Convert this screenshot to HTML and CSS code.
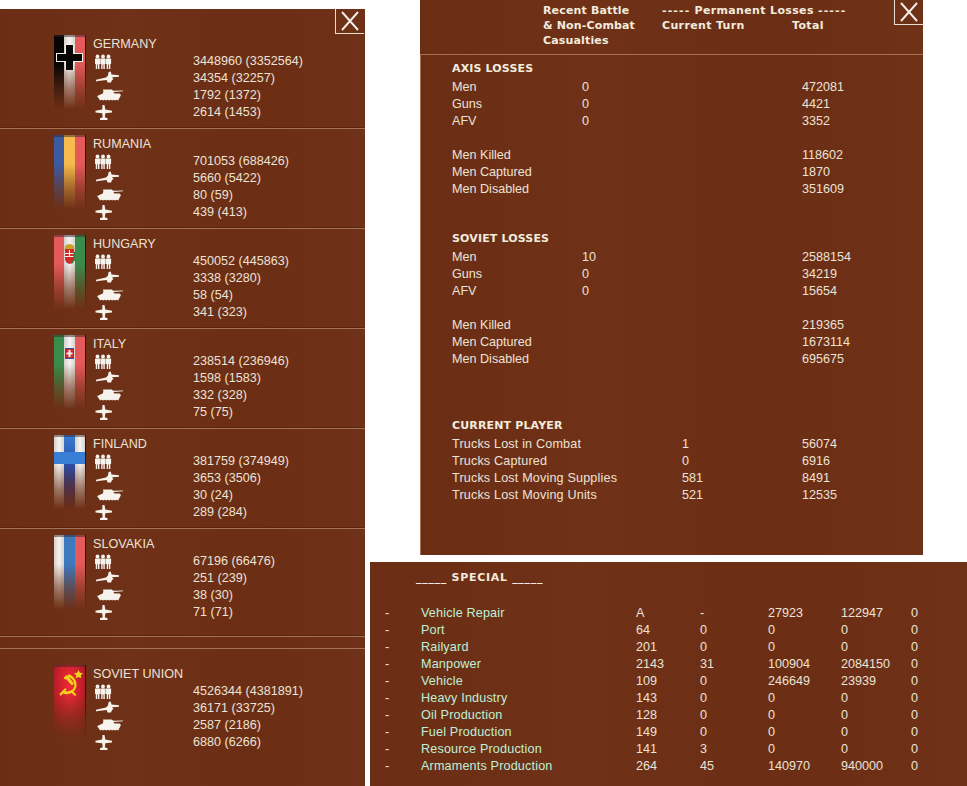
FILE: index.html
```html
<!DOCTYPE html>
<html lang="en">
<head>
<meta charset="utf-8">
<title>Losses</title>
<link rel="stylesheet" href="styles.css">
</head>
<body>
<svg class="defs" width="0" height="0" aria-hidden="true">
  <symbol id="men" viewBox="0 0 32 17">
    <g><circle cx="4.500" cy="3.500" r="1.900"/><path d="M2 5.500h5.200v5.500H6.400V16H5v-4.500H4.200V16H2.800V11H2z"/></g>
    <g><circle cx="10" cy="3.500" r="1.900"/><path d="M7.400 5.500h5.200v5.500h-.8V16h-1.400v-4.500h-.8V16H8.200V11h-.8z"/></g>
    <g><circle cx="15.500" cy="3.500" r="1.900"/><path d="M12.900 5.500h5.200v5.500h-.8V16h-1.400v-4.500h-.8V16h-1.400V11h-.8z"/></g>
  </symbol>
  <symbol id="gun" viewBox="0 0 32 17">
    <path d="M3 9.800l10-2.300 2-2 .6-3.500 2-.5 1 3 7.400.8v1.500l-7 .5 1.500 1.800-1.500 1-1 2.400h-3.500l-.8-2.500-8.700 1-1.800.4z"/>
  </symbol>
  <symbol id="tank" viewBox="0 0 32 17">
    <path d="M10 2.500h8.500l2 1.300 9.500-.3v.8l-9.500.7 .8 1.500h5.200l1.500 1.500-2.800 5.400-1.500-.6-1.500.6-1.500-.6-1.500.6-1.500-.6-1.500.6-1.500-.6-1.500.6-1.500-.6-1.500.6-1.500-.6-1.500.6-3-4.200V9l5.500-2.500 .7-2z"/>
  </symbol>
  <symbol id="plane" viewBox="0 0 32 17">
    <path d="M9.500 1h2l.8 4.500 6.700 1.200v1.800l-6.700.8-.5 4 2.700 1V16H7v-1.700l2.700-1-.5-4-6.700-.8V6.700l6.700-1.200z"/>
  </symbol>
</svg>

<section class="panel forces">
  <div class="close"><svg viewBox="0 0 28 24"><path d="M6 3l16 18M22 3L6 21"/></svg></div>

  <div class="country first">
    <div class="flag"><i class="s-black"></i><i class="s-white"></i><i class="s-red"></i>
      <svg class="emblem" viewBox="0 0 31 75"><path class="ec-w" d="M11 9h9v9h9v9h-9v9h-9v-9H2v-9h9z"/><path class="ec-k" d="M12 10h7v9h9v7h-9v9h-7v-9H3v-7h9z"/></svg>
    </div>
    <div class="info"><div class="name">GERMANY</div>
      <div class="stat"><svg class="ic"><use href="#men"/></svg><span>3448960 (3352564)</span></div>
      <div class="stat"><svg class="ic"><use href="#gun"/></svg><span>34354 (32257)</span></div>
      <div class="stat"><svg class="ic"><use href="#tank"/></svg><span>1792 (1372)</span></div>
      <div class="stat"><svg class="ic"><use href="#plane"/></svg><span>2614 (1453)</span></div>
    </div>
  </div>

  <div class="country">
    <div class="flag"><i class="s-blue"></i><i class="s-yellow"></i><i class="s-red"></i></div>
    <div class="info"><div class="name">RUMANIA</div>
      <div class="stat"><svg class="ic"><use href="#men"/></svg><span>701053 (688426)</span></div>
      <div class="stat"><svg class="ic"><use href="#gun"/></svg><span>5660 (5422)</span></div>
      <div class="stat"><svg class="ic"><use href="#tank"/></svg><span>80 (59)</span></div>
      <div class="stat"><svg class="ic"><use href="#plane"/></svg><span>439 (413)</span></div>
    </div>
  </div>

  <div class="country">
    <div class="flag"><i class="s-red"></i><i class="s-white"></i><i class="s-green"></i>
      <svg class="emblem" viewBox="0 0 31 75"><path class="ec-g" d="M11 11q4.500-4 9 0l.5 4h-10z"/><path class="ec-r" d="M11 14h9v11q-1 3-4.500 4-3.500-1-4.500-4z"/><path class="ec-w" d="M11 18h9v1h-9zM11 21h9v1h-9zM15 15h1v6h-1z"/><path class="ec-gr" d="M19.500 16l1.500 1v8l-3 4-1-1 2.500-4z"/></svg>
    </div>
    <div class="info"><div class="name">HUNGARY</div>
      <div class="stat"><svg class="ic"><use href="#men"/></svg><span>450052 (445863)</span></div>
      <div class="stat"><svg class="ic"><use href="#gun"/></svg><span>3338 (3280)</span></div>
      <div class="stat"><svg class="ic"><use href="#tank"/></svg><span>58 (54)</span></div>
      <div class="stat"><svg class="ic"><use href="#plane"/></svg><span>341 (323)</span></div>
    </div>
  </div>

  <div class="country">
    <div class="flag"><i class="s-green"></i><i class="s-white"></i><i class="s-red"></i>
      <svg class="emblem" viewBox="0 0 31 75"><path class="ec-b" d="M11 13h9v11h-9z"/><path class="ec-r" d="M12 14h7v9h-7z"/><path class="ec-w" d="M14.500 15h2v2.500h2v2h-2V22h-2v-2.500h-2v-2h2z"/></svg>
    </div>
    <div class="info"><div class="name">ITALY</div>
      <div class="stat"><svg class="ic"><use href="#men"/></svg><span>238514 (236946)</span></div>
      <div class="stat"><svg class="ic"><use href="#gun"/></svg><span>1598 (1583)</span></div>
      <div class="stat"><svg class="ic"><use href="#tank"/></svg><span>332 (328)</span></div>
      <div class="stat"><svg class="ic"><use href="#plane"/></svg><span>75 (75)</span></div>
    </div>
  </div>

  <div class="country">
    <div class="flag"><i class="s-white"></i><i class="s-fin"></i><i class="s-white"></i>
      <svg class="emblem" viewBox="0 0 31 75"><path class="ec-fin" d="M0 17h31v12H0z"/></svg>
    </div>
    <div class="info"><div class="name">FINLAND</div>
      <div class="stat"><svg class="ic"><use href="#men"/></svg><span>381759 (374949)</span></div>
      <div class="stat"><svg class="ic"><use href="#gun"/></svg><span>3653 (3506)</span></div>
      <div class="stat"><svg class="ic"><use href="#tank"/></svg><span>30 (24)</span></div>
      <div class="stat"><svg class="ic"><use href="#plane"/></svg><span>289 (284)</span></div>
    </div>
  </div>

  <div class="country tall">
    <div class="flag"><i class="s-white"></i><i class="s-midblue"></i><i class="s-red"></i></div>
    <div class="info"><div class="name">SLOVAKIA</div>
      <div class="stat"><svg class="ic"><use href="#men"/></svg><span>67196 (66476)</span></div>
      <div class="stat"><svg class="ic"><use href="#gun"/></svg><span>251 (239)</span></div>
      <div class="stat"><svg class="ic"><use href="#tank"/></svg><span>38 (30)</span></div>
      <div class="stat"><svg class="ic"><use href="#plane"/></svg><span>71 (71)</span></div>
    </div>
  </div>

  <div class="spacer"></div>

  <div class="country soviet">
    <div class="flag"><i class="s-soviet"></i>
      <svg class="emblem" viewBox="0 0 31 75"><path class="ec-y" d="M24.500 5l1.400 2.800 3.100.4-2.200 2.100.5 3-2.800-1.400-2.800 1.400.5-3-2.200-2.100 3.100-.4z"/><path class="ec-y" d="M13 11.500l2-2.500q7 3.500 7.500 10 .3 5-3 7.500l3 3.500-1.500 1.300-3.300-3.200q-4.500 2-8.700.4l-2.200 2.500L5.300 29l6-6 1.400 1.400-1.700 1.700q4.500 1 7.500-1.500 2.500-2.500 1.500-7-1-4-6.500-6.100z"/><path class="ec-y" d="M9.500 13l3-3 1.500 1 6 7.500-2 2-6-6.500-1 .5z"/></svg>
    </div>
    <div class="info"><div class="name">SOVIET UNION</div>
      <div class="stat"><svg class="ic"><use href="#men"/></svg><span>4526344 (4381891)</span></div>
      <div class="stat"><svg class="ic"><use href="#gun"/></svg><span>36171 (33725)</span></div>
      <div class="stat"><svg class="ic"><use href="#tank"/></svg><span>2587 (2186)</span></div>
      <div class="stat"><svg class="ic"><use href="#plane"/></svg><span>6880 (6266)</span></div>
    </div>
  </div>
</section>

<div class="right">
  <section class="panel losses">
    <div class="close"><svg viewBox="0 0 28 24"><path d="M6 3l16 18M22 3L6 21"/></svg></div>
    <div class="lhead">
      <div class="hc hc1">Recent Battle<br>&amp; Non-Combat<br>Casualties</div>
      <div class="hc hc2"><span class="dash">-----</span> Permanent Losses <span class="dash">-----</span><br><span class="hcur">Current Turn</span><span>Total</span></div>
    </div>
    <div class="lbody">
      <h3 class="htitle">AXIS LOSSES</h3>
      <div class="row"><span>Men</span><span>0</span><span></span><span>472081</span></div>
      <div class="row"><span>Guns</span><span>0</span><span></span><span>4421</span></div>
      <div class="row"><span>AFV</span><span>0</span><span></span><span>3352</span></div>
      <div class="row gap"><span>Men Killed</span><span></span><span></span><span>118602</span></div>
      <div class="row"><span>Men Captured</span><span></span><span></span><span>1870</span></div>
      <div class="row"><span>Men Disabled</span><span></span><span></span><span>351609</span></div>

      <h3 class="htitle sov">SOVIET LOSSES</h3>
      <div class="row"><span>Men</span><span>10</span><span></span><span>2588154</span></div>
      <div class="row"><span>Guns</span><span>0</span><span></span><span>34219</span></div>
      <div class="row"><span>AFV</span><span>0</span><span></span><span>15654</span></div>
      <div class="row gap"><span>Men Killed</span><span></span><span></span><span>219365</span></div>
      <div class="row"><span>Men Captured</span><span></span><span></span><span>1673114</span></div>
      <div class="row"><span>Men Disabled</span><span></span><span></span><span>695675</span></div>

      <h3 class="htitle cur">CURRENT PLAYER</h3>
      <div class="row wide"><span class="lab">Trucks Lost in Combat</span><span>1</span><span>56074</span></div>
      <div class="row wide"><span class="lab">Trucks Captured</span><span>0</span><span>6916</span></div>
      <div class="row wide"><span class="lab">Trucks Lost Moving Supplies</span><span>581</span><span>8491</span></div>
      <div class="row wide"><span class="lab">Trucks Lost Moving Units</span><span>521</span><span>12535</span></div>
    </div>
  </section>

  <section class="panel special">
    <h3 class="htitle stitle">_____ SPECIAL _____</h3>
    <div class="srow"><span>-</span><span class="fac">Vehicle Repair</span><span>A</span><span>-</span><span>27923</span><span>122947</span><span>0</span></div>
    <div class="srow"><span>-</span><span class="fac">Port</span><span>64</span><span>0</span><span>0</span><span>0</span><span>0</span></div>
    <div class="srow"><span>-</span><span class="fac">Railyard</span><span>201</span><span>0</span><span>0</span><span>0</span><span>0</span></div>
    <div class="srow"><span>-</span><span class="fac">Manpower</span><span>2143</span><span>31</span><span>100904</span><span>2084150</span><span>0</span></div>
    <div class="srow"><span>-</span><span class="fac">Vehicle</span><span>109</span><span>0</span><span>246649</span><span>23939</span><span>0</span></div>
    <div class="srow"><span>-</span><span class="fac">Heavy Industry</span><span>143</span><span>0</span><span>0</span><span>0</span><span>0</span></div>
    <div class="srow"><span>-</span><span class="fac">Oil Production</span><span>128</span><span>0</span><span>0</span><span>0</span><span>0</span></div>
    <div class="srow"><span>-</span><span class="fac">Fuel Production</span><span>149</span><span>0</span><span>0</span><span>0</span><span>0</span></div>
    <div class="srow"><span>-</span><span class="fac">Resource Production</span><span>141</span><span>3</span><span>0</span><span>0</span><span>0</span></div>
    <div class="srow"><span>-</span><span class="fac">Armaments Production</span><span>264</span><span>45</span><span>140970</span><span>940000</span><span>0</span></div>
  </section>
</div>
</body>
</html>
```

FILE: styles.css
```css
* { box-sizing: border-box; }

html, body {
  margin: 0;
  height: 786px;
  overflow: hidden;
  background: #fff;
}

body {
  display: flex;
  align-items: flex-start;
  font: 12.6px/17px "Liberation Sans", Arial, sans-serif;
  color: #ece2d6;
}

.defs { position: absolute; }

.panel {
  position: relative;
  background-color: #6d2f15;
  background-image: linear-gradient(90deg, rgba(0,0,0,.02), rgba(255,255,255,.012) 35%, rgba(0,0,0,.015) 70%, rgba(255,255,255,.01));
}

.close {
  position: absolute;
  top: 0;
  right: 1px;
  width: 29px;
  height: 25px;
  border-left: 1px solid #e8dcd0;
  border-bottom: 1px solid #e8dcd0;
}

.losses .close { right: 0; }

.close svg {
  display: block;
  width: 28px;
  height: 24px;
  fill: none;
  stroke: #f4eee8;
  stroke-width: 1.9;
}

/* Left panel: forces by country */
.forces {
  flex: none;
  width: 365px;
  height: 777px;
  margin-top: 9px;
}

.country {
  display: flex;
  gap: 7px;
  height: 100px;
  padding: 6px 0 0 54px;
  border-bottom: 1px solid #a57258;
  box-shadow: inset 0 -1px 0 #5a2410;
}

.country.first { height: 120px; padding-top: 26px; }
.country.tall { height: 108px; }
.country.soviet { height: 137px; padding-top: 16px; border-bottom: 0; box-shadow: none; }

.spacer {
  height: 12px;
  border-bottom: 1px solid #a57258;
}

.flag {
  position: relative;
  flex: none;
  display: flex;
  width: 32px;
  height: 76px;
  border-right: 1px solid #2e1208;
}

.flag i { flex: 1; }

.flag::before {
  content: "";
  position: absolute;
  z-index: 1;
  inset: 0 0 auto 0;
  height: 2px;
  background: rgba(50,40,40,.5);
}

.flag::after {
  content: "";
  position: absolute;
  inset: 0 -1px 0 0;
  background: linear-gradient(180deg, rgba(109,47,21,0) 38%, rgba(109,47,21,.6) 70%, #6d2f15 98%);
}

.s-black { background: #060504; }
.s-white { background: linear-gradient(90deg, #d5d0cc, #f6f3f0 50%, #d8d3cf); }
.s-red { background: #e4595a; }
.s-blue { background: #3d5a9e; }
.s-yellow { background: #f6bb4c; }
.s-green { background: #3a8b4c; }
.s-fin { background: linear-gradient(180deg, #3a7cd0, #2a4ea8 40%, #2a1a66); }
.s-midblue { background: #3f79bd; }
.s-soviet { background: radial-gradient(ellipse at 50% 30%, #ef2a35, #c41f2c 55%, #8a1a22); }

.emblem {
  position: absolute;
  inset: 0;
  width: 31px;
  height: 75px;
}

.ec-w { fill: #f4f0ea; }
.ec-k { fill: #060504; }
.ec-r { fill: #cf2a2a; }
.ec-g { fill: #c9a227; }
.ec-gr { fill: #3f7a3a; }
.ec-b { fill: #3a4ea8; }
.ec-y { fill: #f2d21c; }
.ec-fin { fill: #3a7fd6; }

.info { flex: 1; padding-top: 1px; }

.name { height: 17px; }

.stat {
  display: flex;
  height: 17px;
}

.ic {
  flex: none;
  width: 32px;
  height: 17px;
  margin-right: 68px;
  fill: #f6f2ec;
}

/* Right column */
.right {
  flex: none;
  width: 602px;
}

.losses {
  width: 503px;
  height: 555px;
  margin-left: 55px;
}

.lhead {
  display: flex;
  height: 55px;
  padding: 3px 0 0 123px;
  border-bottom: 1px solid #a57258;
}

.hc, .htitle {
  font: bold 11px/15px "DejaVu Sans", Verdana, sans-serif;
  color: #f3ebdd;
  letter-spacing: .15px;
}

.hc1 { width: 119px; }
.hc2 { width: 220px; letter-spacing: .35px; }
.dash { letter-spacing: 1.1px; }
.hcur { display: inline-block; width: 130px; }

.lbody {
  height: 500px;
  padding: 5px 0 0 31px;
  border-left: 1px solid #a57258;
}

.htitle {
  margin: 0 0 2px;
  height: 17px;
  line-height: 17px;
}

.htitle.sov { margin-top: 32px; }
.htitle.cur { margin-top: 49px; margin-bottom: 2px; }

.row {
  display: grid;
  grid-template-columns: 130px 100px 120px 1fr;
  height: 17px;
}

.row.gap { margin-top: 17px; }
.row.wide { grid-template-columns: 230px 120px 1fr; }

.lab, .fac { letter-spacing: .17px; }

/* Bottom panel: special */
.special {
  width: 597px;
  height: 224px;
  margin: 7px 0 0 5px;
  padding: 7px 0 0 15px;
}

.htitle.stitle {
  margin: 0 0 19px 31px;
  letter-spacing: .7px;
}

.srow {
  display: grid;
  grid-template-columns: 36px 215px 64px 68px 73px 70px 1fr;
  height: 17px;
}

.fac { color: #bdf0d6; }
```
